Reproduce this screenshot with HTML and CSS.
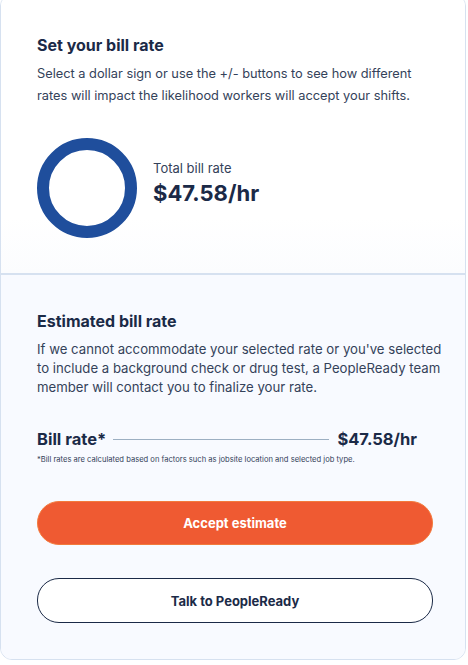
FILE: index.html
```html
<!DOCTYPE html>
<html lang="en">
<head>
  <meta charset="UTF-8">
  <title>Bill rate</title>
  <meta name="viewport" content="width=device-width, initial-scale=1">
  <link rel="stylesheet" href="styles.css">
</head>
<body>

  <div class="card">
    <!-- Set your bill rate -->
    <section class="rate-top">
      <h2>Set your bill rate</h2>
      <p class="lead">Select a dollar sign or use the +/- buttons to see how different rates will impact the likelihood workers will accept your shifts.</p>
      <div class="total">
        <div class="ring"></div>
        <div class="total-text">
          <span class="total-label">Total bill rate</span>
          <strong class="total-value">$47.58/hr</strong>
        </div>
      </div>
    </section>

    <!-- Estimated bill rate -->
    <section class="rate-bottom">
      <h2>Estimated bill rate</h2>
      <p class="lead tight">If we cannot accommodate your selected rate or you've selected to include a background check or drug test, a PeopleReady team member will contact you to finalize your rate.</p>
      <div class="bill-row">
        <span class="bill-label">Bill rate*</span>
        <span class="bill-line"></span>
        <span class="bill-value">$47.58/hr</span>
      </div>
      <p class="note">*Bill rates are calculated based on factors such as jobsite location and selected job type.</p>
      <button class="btn btn-accept">Accept estimate</button>
      <button class="btn btn-talk">Talk to PeopleReady</button>
    </section>
  </div>

</body>
</html>
```

FILE: styles.css
```css
body { margin: 0; font-family: Inter, "Noto Sans", sans-serif; background: #fff; color: #1b2a47; }

.card {
  width: 466px; margin-top: -6px; box-sizing: border-box;
  border: 1px solid #d6e1f0; border-radius: 12px; overflow: hidden;
}

h2 { margin: 0; font-size: 16px; line-height: 20px; font-weight: 700; color: #1b2a47; }
.lead { margin: 8px 0 0; font-size: 12.8px; line-height: 22px; color: #34425a; }
.lead.tight { margin: 9px -12px 0 0; line-height: 19px; font-size: 13.2px; }

/* top */
.rate-top {
  padding: 40px 28px 35px 36px;
  background: linear-gradient(#fff 80%, #fbfcfe);
}
.total { display: flex; gap: 16px; margin-top: 31px; }
.ring {
  width: 100px; height: 100px; box-sizing: border-box;
  border: 12px solid #1f4e9c; border-radius: 50%;
}
.total-text { display: flex; flex-direction: column; margin-top: 22px; }
.total-label { font-size: 13px; line-height: 16px; color: #34425a; }
.total-value { margin-top: 3px; font-size: 22px; line-height: 28px; font-weight: 700; color: #1b2a47; }

/* bottom */
.rate-bottom {
  padding: 36px 32px 36px 36px;
  background: #f8faff; border-top: 2px solid #d6e1f0;
}
.bill-row { display: flex; align-items: center; gap: 7px; margin-top: 31px; padding-right: 16px; }
.bill-label { font-size: 16.5px; line-height: 22px; font-weight: 700; }
.bill-line { flex: 1; height: 1px; background: #9cafc2; }
.bill-value { margin-left: 1px; font-size: 16.5px; line-height: 22px; font-weight: 700; }
.note { margin: 4px 0 0; font-size: 7.6px; line-height: 12px; color: #34425a; }

.btn {
  display: block; width: 100%; height: 44px; margin-top: 35px;
  border-radius: 22px; font-family: inherit; font-size: 13px; font-weight: 700; cursor: pointer;
}
.btn-accept { background: #ef5a32; border: 1px solid #f27a3c; color: #fff; }
.btn-talk { height: 45px; margin-top: 33px; background: #fff; border: 1px solid #1b2a47; color: #1b2a47; }
```
